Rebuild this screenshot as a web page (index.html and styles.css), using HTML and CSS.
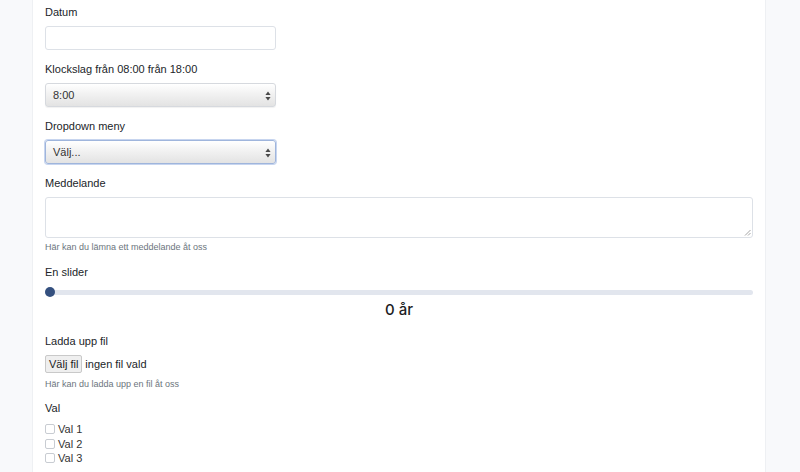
FILE: index.html
```html
<!DOCTYPE html>
<html lang="sv">
<head>
<meta charset="utf-8">
<title>Formulär</title>
<link rel="stylesheet" href="styles.css">
</head>
<body>
<div class="page">
  <main class="card">
    <div class="group">
      <label class="label">Datum</label>
      <input class="input" type="text">
    </div>
    <div class="group">
      <label class="label">Klockslag från 08:00 från 18:00</label>
      <div class="select">
        <span>8:00</span>
        <svg class="arrows" width="6" height="10" viewBox="0 0 6 10"><path d="M3 0.5 L5.6 4 H0.4 Z M3 9.5 L5.6 6 H0.4 Z" fill="#4a4a4a"/></svg>
      </div>
    </div>
    <div class="group">
      <label class="label">Dropdown meny</label>
      <div class="select focus">
        <span>Välj...</span>
        <svg class="arrows" width="6" height="10" viewBox="0 0 6 10"><path d="M3 0.5 L5.6 4 H0.4 Z M3 9.5 L5.6 6 H0.4 Z" fill="#4a4a4a"/></svg>
      </div>
    </div>
    <div class="group">
      <label class="label">Meddelande</label>
      <div class="textarea">
        <svg class="grip" width="7" height="7" viewBox="0 0 7 7"><path d="M6.5 1 L1 6.5 M6.5 4 L4 6.5" stroke="#9a9a9a" stroke-width="0.9"/></svg>
      </div>
      <div class="help">Här kan du lämna ett meddelande åt oss</div>
    </div>
    <div class="group">
      <label class="label">En slider</label>
      <div class="slider"><span class="thumb"></span></div>
      <div class="value">0 år</div>
    </div>
    <div class="group tight">
      <label class="label">Ladda upp fil</label>
      <div class="file"><span class="file-btn">Välj fil</span><span class="file-name">ingen fil vald</span></div>
      <div class="help">Här kan du ladda upp en fil åt oss</div>
    </div>
    <div class="group">
      <label class="label">Val</label>
      <div class="checks">
        <div class="check"><span class="box"></span>Val 1</div>
        <div class="check"><span class="box"></span>Val 2</div>
        <div class="check"><span class="box"></span>Val 3</div>
      </div>
    </div>
  </main>
</div>
</body>
</html>
```

FILE: styles.css
```css
* { box-sizing: border-box; }
html, body { margin: 0; padding: 0; }
body {
  background: #f8f9fb;
  font-family: "Liberation Sans", Arial, Helvetica, sans-serif;
  color: #212529;
  font-size: 11px;
  height: 472px;
  overflow: hidden;
}
.page {
  display: flex;
  padding: 0 34px 0 32px;
}
.card {
  flex: 1;
  background: #ffffff;
  border-left: 1px solid #eef0f3;
  border-right: 1px solid #eef0f3;
  padding: 5px 12px 40px 12px;
  display: flex;
  flex-direction: column;
}
.group {
  display: flex;
  flex-direction: column;
  margin-bottom: 12px;
}
.group.tight { margin-bottom: 11px; }
.label {
  display: block;
  line-height: 14px;
  height: 14px;
  font-size: 11px;
  margin-bottom: 7px;
}
.input {
  width: 231px;
  height: 24px;
  border: 1px solid #dde1e7;
  border-radius: 3px;
  background: #fff;
  padding: 0 8px;
  font: inherit;
  outline: none;
}
.select {
  position: relative;
  width: 231px;
  height: 24px;
  border: 1px solid #d6d9de;
  border-radius: 3px;
  background: linear-gradient(#ffffff 0%, #f3f3f3 40%, #e3e3e3 100%);
  display: flex;
  align-items: center;
  padding: 0 7px;
  font-size: 11px;
  color: #333;
  box-shadow: 0 1px 1px rgba(0,0,0,0.06);
}
.select.focus {
  border-color: #9fb5dc;
  box-shadow: 0 0 0 1px #c7d5ef;
}
.arrows {
  position: absolute;
  right: 4px;
  top: 7px;
}
.textarea {
  position: relative;
  height: 41px;
  border: 1px solid #dde1e7;
  border-radius: 3px;
  background: #fff;
}
.grip {
  position: absolute;
  right: 1px;
  bottom: 1px;
}
.help {
  margin-top: 3px;
  font-size: 9px;
  line-height: 12px;
  color: #6c757d;
}
.slider {
  position: relative;
  height: 10px;
  margin-top: 1px;
  display: flex;
  align-items: center;
}
.slider::before {
  content: "";
  flex: 1;
  height: 5px;
  border-radius: 3px;
  background: #e2e6ee;
}
.thumb {
  position: absolute;
  left: 0;
  top: 0;
  width: 10px;
  height: 10px;
  border-radius: 50%;
  background: #34507f;
}
.value {
  text-align: center;
  font-family: Inter, "Liberation Sans", sans-serif;
  font-size: 15px;
  font-weight: 500;
  line-height: 18px;
  margin-top: 4px;
  margin-bottom: 3px;
  color: #1d1d1f;
}
.file {
  display: flex;
  align-items: center;
  height: 18px;
}
.file-btn {
  height: 18px;
  line-height: 16px;
  padding: 0 3px;
  border: 1px solid #c9c9c9;
  border-radius: 2px;
  background: #efefef;
  font-size: 11px;
  color: #222;
}
.file-name {
  margin-left: 3px;
  font-size: 11px;
}
.file + .help { margin-top: 5px; }
.checks {
  display: flex;
  flex-direction: column;
}
.check {
  display: flex;
  align-items: center;
  height: 14.5px;
  font-size: 11px;
  color: #333;
}
.box {
  width: 10px;
  height: 10px;
  border: 1px solid #c8ccd2;
  border-radius: 2px;
  background: #fff;
  margin-right: 3px;
}
```
